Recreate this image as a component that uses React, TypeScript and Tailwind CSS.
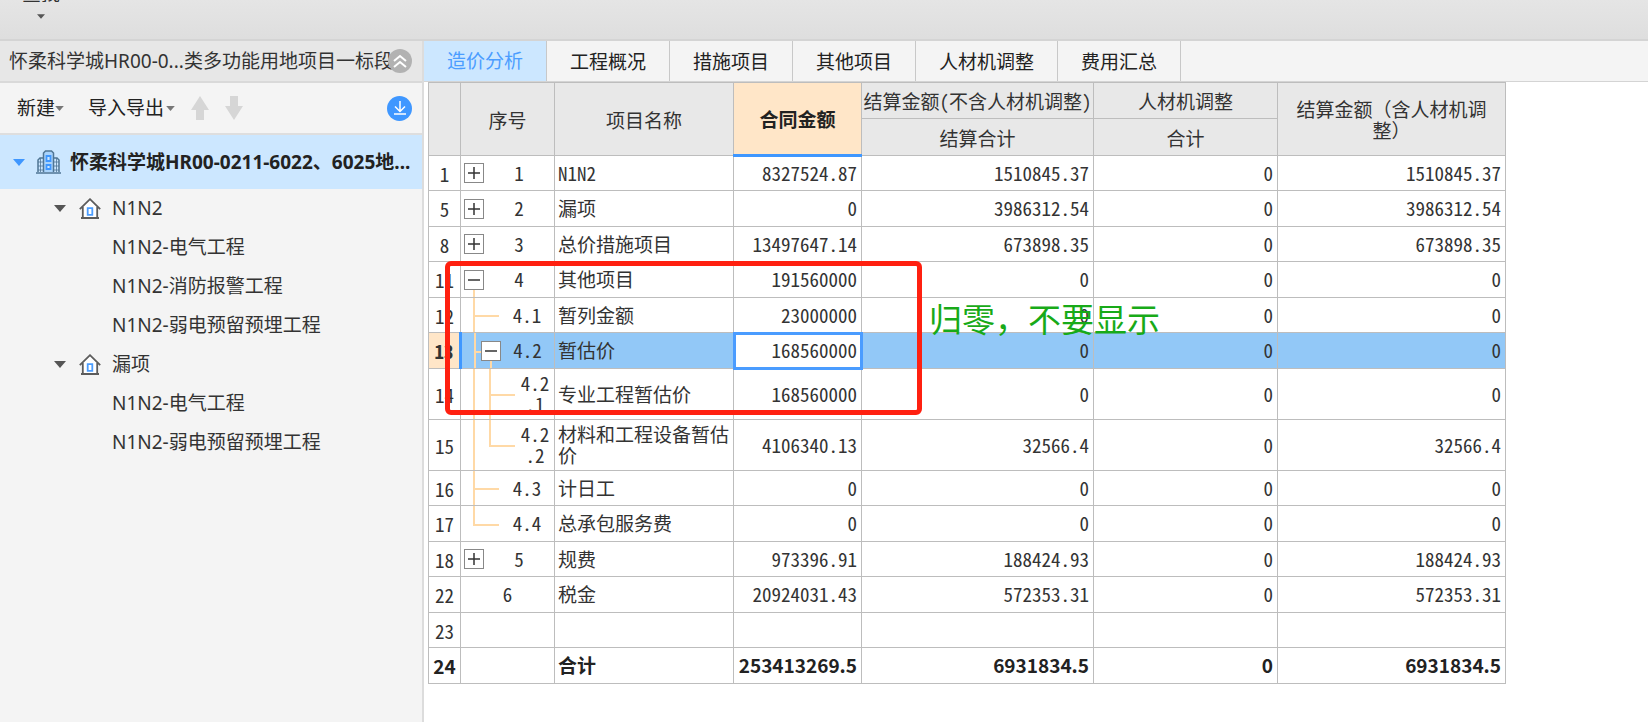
import React, { useState } from 'react';

type Row = {
  line: number;
  code?: string[];
  name?: string;
  amounts?: string[];
  depth?: number;
  toggle?: 'plus' | 'minus';
  // which guides run through the cell: full height, top half or bottom half
  guides?: ('full' | 'top' | 'bottom')[];
  branch?: boolean;
  bold?: boolean;
};

const TABS = ['造价分析', '工程概况', '措施项目', '其他项目', '人材机调整', '费用汇总'];

const ROWS: Row[] = [
  { line: 1, code: ['1'], name: 'N1N2', amounts: ['8327524.87', '1510845.37', '0', '1510845.37'], toggle: 'plus' },
  { line: 5, code: ['2'], name: '漏项', amounts: ['0', '3986312.54', '0', '3986312.54'], toggle: 'plus' },
  { line: 8, code: ['3'], name: '总价措施项目', amounts: ['13497647.14', '673898.35', '0', '673898.35'], toggle: 'plus' },
  { line: 11, code: ['4'], name: '其他项目', amounts: ['191560000', '0', '0', '0'], toggle: 'minus', guides: ['bottom'] },
  { line: 12, code: ['4.1'], name: '暂列金额', amounts: ['23000000', '0', '0', '0'], depth: 1, guides: ['full'], branch: true },
  { line: 13, code: ['4.2'], name: '暂估价', amounts: ['168560000', '0', '0', '0'], depth: 1, toggle: 'minus', guides: ['full', 'bottom'], branch: true },
  { line: 14, code: ['4.2', '.1'], name: '专业工程暂估价', amounts: ['168560000', '0', '0', '0'], depth: 2, guides: ['full', 'full'], branch: true },
  { line: 15, code: ['4.2', '.2'], name: '材料和工程设备暂估价', amounts: ['4106340.13', '32566.4', '0', '32566.4'], depth: 2, guides: ['full', 'top'], branch: true },
  { line: 16, code: ['4.3'], name: '计日工', amounts: ['0', '0', '0', '0'], depth: 1, guides: ['full'], branch: true },
  { line: 17, code: ['4.4'], name: '总承包服务费', amounts: ['0', '0', '0', '0'], depth: 1, guides: ['top'], branch: true },
  { line: 18, code: ['5'], name: '规费', amounts: ['973396.91', '188424.93', '0', '188424.93'], toggle: 'plus' },
  { line: 22, code: ['6'], name: '税金', amounts: ['20924031.43', '572353.31', '0', '572353.31'] },
  { line: 23 },
  { line: 24, name: '合计', amounts: ['253413269.5', '6931834.5', '0', '6931834.5'], bold: true },
];

const TREE = [
  { name: 'N1N2', children: ['N1N2-电气工程', 'N1N2-消防报警工程', 'N1N2-弱电预留预埋工程'] },
  { name: '漏项', children: ['N1N2-电气工程', 'N1N2-弱电预留预埋工程'] },
];

const SELECTED_LINE = 13;

function Caret({ className }: { className: string }) {
  return (
    <svg viewBox="0 0 12 7" className={className} fill="currentColor" aria-hidden="true">
      <path d="M0 0h12L6 7z" />
    </svg>
  );
}

function BuildingIcon() {
  return (
    <svg viewBox="0 0 25 24" className="h-6 w-[25px] shrink-0" fill="none" aria-hidden="true">
      <path d="M7.5 22V3l2-2h6l2 2v19" fill="#a9d3fb" stroke="#4f7594" strokeWidth="1.5" />
      <path d="M7 8H4L2 10v12M18 8h3l2 2v12" stroke="#4f7594" strokeWidth="1.5" />
      <path d="M2 12h5M2 16h5M2 20h5M18 12h5M18 16h5M18 20h5M4.5 8v14M20.5 8v14" stroke="#4f7594" strokeWidth=".8" />
      <path d="M10.5 6h4v5h-4zM10.5 15h4v4h-4z" fill="#cce7ff" stroke="#3f97ff" strokeWidth="1.8" />
      <path d="M0 23h25" stroke="#4f7594" strokeWidth="1.5" />
    </svg>
  );
}

function HouseIcon() {
  return (
    <svg viewBox="0 0 22 21" className="h-[21px] w-[22px] shrink-0" fill="none" aria-hidden="true">
      <path d="M4 9.5v10h14v-10L11 2z" fill="#fff" />
      <path d="M.8 11.200L11 1.200l10.200 10M3.800 9v10.500M18.200 9v10.500M2 20h18" stroke="#5c5c5c" strokeWidth="1.8" />
      <path d="M8.700 10.200h4.600v6.600H8.700z" stroke="#4b9dff" strokeWidth="1.8" />
    </svg>
  );
}

function Sidebar() {
  return (
    <aside className="flex w-[424px] shrink-0 flex-col border-r-2 border-[#dcdcdc] bg-[#f4f4f4]">
      <header className="relative flex h-[42px] items-center border-b-2 border-[#d9d9d9] bg-[#e7e7e7] pl-[9px]">
        <h1 className="whitespace-nowrap text-[19px]">怀柔科学城HR00-0...类多功能用地项目一标段</h1>
        <button aria-label="收起" className="absolute right-[10px] flex size-6 items-center justify-center rounded-full bg-[#b2b2b2]">
          <svg viewBox="0 0 14 14" className="size-[14px]" fill="none" stroke="#fff" strokeWidth="2">
            <path d="M1 7l6-5 6 5M1 13l6-5 6 5" />
          </svg>
        </button>
      </header>

      <div className="flex h-[52px] items-center border-b-2 border-[#dedede] pl-[17px] pr-[10px] text-[19px] text-[#222]">
        <button className="flex items-center">
          新建
          <Caret className="h-[5px] w-[9px] text-[#777]" />
        </button>
        <button className="ml-6 flex items-center gap-[2px]">
          导入导出
          <Caret className="h-[5px] w-[9px] text-[#777]" />
        </button>
        <button aria-label="上移" className="ml-4">
          <svg viewBox="0 0 18 24" className="h-6 w-[18px]" fill="#d6d6d6">
            <path d="M9 0l9 14h-5v10H5V14H0z" />
          </svg>
        </button>
        <button aria-label="下移" className="ml-4">
          <svg viewBox="0 0 18 24" className="h-6 w-[18px]" fill="#d6d6d6">
            <path d="M9 24l9-14h-5V0H5v10H0z" />
          </svg>
        </button>
        <button aria-label="下载" className="ml-auto flex size-[25px] items-center justify-center rounded-full bg-[#3f97ff]">
          <svg viewBox="0 0 14 14" className="size-[14px]" fill="none" stroke="#fff" strokeWidth="1.5">
            <path d="M7 0v10M2 5.500l5 5 5-5M1 13h12" />
          </svg>
        </button>
      </div>

      <nav className="text-[19px]">
        <button className="flex h-[54px] w-full items-center bg-[#cce7ff] pl-[13px] font-bold text-[#222]">
          <Caret className="h-[7px] w-3 text-[#3f97ff]" />
          <span className="ml-[11px] mr-[9px] flex">
            <BuildingIcon />
          </span>
          <span className="whitespace-nowrap">怀柔科学城HR00-0211-6022、6025地...</span>
        </button>
        <ul>
          {TREE.map((group) => (
            <li key={group.name}>
              <button className="flex h-[39px] w-full items-center pl-[54px]">
                <Caret className="h-[7px] w-3 text-[#555]" />
                <span className="ml-[13px] mr-[11px] flex">
                  <HouseIcon />
                </span>
                {group.name}
              </button>
              <ul>
                {group.children.map((child) => (
                  <li key={child}>
                    <button className="flex h-[39px] w-full items-center pl-28">{child}</button>
                  </li>
                ))}
              </ul>
            </li>
          ))}
        </ul>
      </nav>
    </aside>
  );
}

const GUIDE_LEFT = ['left-3', 'left-7'];
const GUIDE_SPAN = { full: 'inset-y-0', top: 'top-0 bottom-1/2', bottom: 'top-1/2 bottom-0' };
const INDENT = ['pl-[3px]', 'pl-[19px]', 'pl-[35px]'];
const BRANCH = ['', 'left-3', 'left-7'];

function CodeCell({ row }: { row: Row }) {
  const depth = row.depth ?? 0;
  return (
    <td className="relative border border-[#bdbdbd] p-0">
      {row.guides?.map((guide, i) => (
        <span key={i} className={`absolute w-[2px] bg-[#ffd9a6] ${GUIDE_LEFT[i]} ${GUIDE_SPAN[guide]}`} />
      ))}
      {row.branch && <span className={`absolute top-1/2 h-[2px] w-[26px] bg-[#ffd9a6] ${BRANCH[depth]}`} />}
      <div className={`relative flex items-center ${row.toggle || row.branch ? INDENT[depth] : ''}`}>
        {row.toggle && (
          <button
            aria-label={row.toggle === 'plus' ? '展开' : '折叠'}
            className="flex size-5 shrink-0 items-center justify-center border border-[#888] bg-white"
          >
            <svg viewBox="0 0 12 12" className="size-3" stroke="#333" strokeWidth="1.5">
              <path d={row.toggle === 'plus' ? 'M0 6h12M6 0v12' : 'M0 6h12'} />
            </svg>
          </button>
        )}
        {row.branch && !row.toggle && <span className="w-5 shrink-0" />}
        <span className="flex-1 pb-[2px] text-center">
          {row.code?.map((part) => (
            <span key={part} className="block">{part}</span>
          ))}
        </span>
      </div>
    </td>
  );
}

function CostTable() {
  const head = 'border border-[#bdbdbd] bg-[#e8e8e8] p-0 font-normal';
  return (
    <table className="w-[1078px] table-fixed border-collapse font-['Noto_Sans_CJK_SC',sans-serif] text-[19px] leading-[21px] text-[#333]">
      <colgroup>
        <col className="w-[32px]" />
        <col className="w-[94px]" />
        <col className="w-[179px]" />
        <col className="w-[128px]" />
        <col className="w-[232px]" />
        <col className="w-[184px]" />
        <col className="w-[228px]" />
      </colgroup>
      <thead>
        <tr className="h-9">
          <th rowSpan={2} className={head} aria-label="行号" />
          <th rowSpan={2} className={head}>序号</th>
          <th rowSpan={2} className={head}>项目名称</th>
          <th rowSpan={2} className="border border-b-3 border-[#bdbdbd] border-b-[#3f97ff] bg-[#ffe6c8] p-0 font-bold text-[#222]">合同金额</th>
          <th className={head}>
            <span className="whitespace-nowrap [font-feature-settings:'hwid']">结算金额(不含人材机调整)</span>
          </th>
          <th className={head}>人材机调整</th>
          <th rowSpan={2} className="border border-[#bdbdbd] bg-[#e8e8e8] px-4 py-0 font-normal">结算金额（含人材机调整）</th>
        </tr>
        <tr className="h-[37px]">
          <th className={head}>结算合计</th>
          <th className={head}>合计</th>
        </tr>
      </thead>
      <tbody className="[font-feature-settings:'hwid']">
        {ROWS.map((row) => {
          const selected = row.line === SELECTED_LINE;
          return (
            <tr
              key={row.line}
              className={`odd:h-[35px] even:h-9 ${selected ? 'bg-[#92c8f7]' : 'bg-white'} ${row.bold ? 'font-bold text-[#222] [font-feature-settings:normal]' : ''}`}
            >
              <th
                scope="row"
                className={`border border-[#bdbdbd] p-0 ${selected ? 'border-r-3 border-r-[#3f97ff] bg-[#ffe6c8]' : row.bold ? '' : 'font-normal'}`}
              >
                {row.line}
              </th>
              <CodeCell row={row} />
              <td className={`border border-[#bdbdbd] pb-[2px] pl-[3px] pr-0 pt-0 ${(row.code?.length ?? 0) > 1 ? 'h-[51px]' : ''}`}>
                {row.name}
              </td>
              {[0, 1, 2, 3].map((i) => (
                <td
                  key={i}
                  className={`border border-[#bdbdbd] pb-[2px] pl-0 pr-1 pt-0 text-right ${selected && i === 0 ? 'bg-white outline-3 -outline-offset-2 outline-[#4a9cff]' : ''}`}
                >
                  {row.amounts?.[i]}
                </td>
              ))}
            </tr>
          );
        })}
      </tbody>
    </table>
  );
}

function App() {
  const [activeTab, setActiveTab] = useState(TABS[0]);

  return (
    <div className="flex min-h-screen flex-col bg-white font-['Noto_Sans','Noto_Sans_CJK_SC',sans-serif] text-[#333]">
      <div className="flex h-[41px] items-start overflow-hidden border-b-2 border-[#d4d4d4] bg-linear-to-b from-[#e5e5e5] to-[#dedede] pl-[22px]">
        <button className="flex flex-col items-center">
          <span className="flex h-[2px] items-end overflow-hidden text-[19px] leading-[16px]">查找</span>
          <Caret className="mt-3 h-[5px] w-2 text-[#555]" />
        </button>
      </div>

      <div className="flex flex-1">
        <Sidebar />
        <main className="min-w-0 flex-1">
          <div role="tablist" className="flex h-[41px] border-b border-[#d4d4d4] bg-[#f4f4f4] text-[19px] text-[#222]">
            {TABS.map((tab) => (
              <button
                key={tab}
                role="tab"
                aria-selected={tab === activeTab}
                onClick={() => setActiveTab(tab)}
                className={`border-r border-[#c8c8c8] px-[23px] ${tab === activeTab ? 'bg-[#cce7ff] text-[#4b9dff]' : 'pt-[2px]'}`}
              >
                {tab}
              </button>
            ))}
          </div>
          <div className="relative pl-1">
            <CostTable />
            {/* review mark-up drawn over the sheet */}
            <div className="pointer-events-none absolute left-[21px] top-[179px] h-[154px] w-[477px] rounded-md border-5 border-[#ff2010]" />
            <p className="pointer-events-none absolute left-[505px] top-[216px] whitespace-nowrap text-[33px] leading-[44px] text-[#18aa18]">
              归零，不要显示
            </p>
          </div>
        </main>
      </div>
    </div>
  );
}

export default App;
